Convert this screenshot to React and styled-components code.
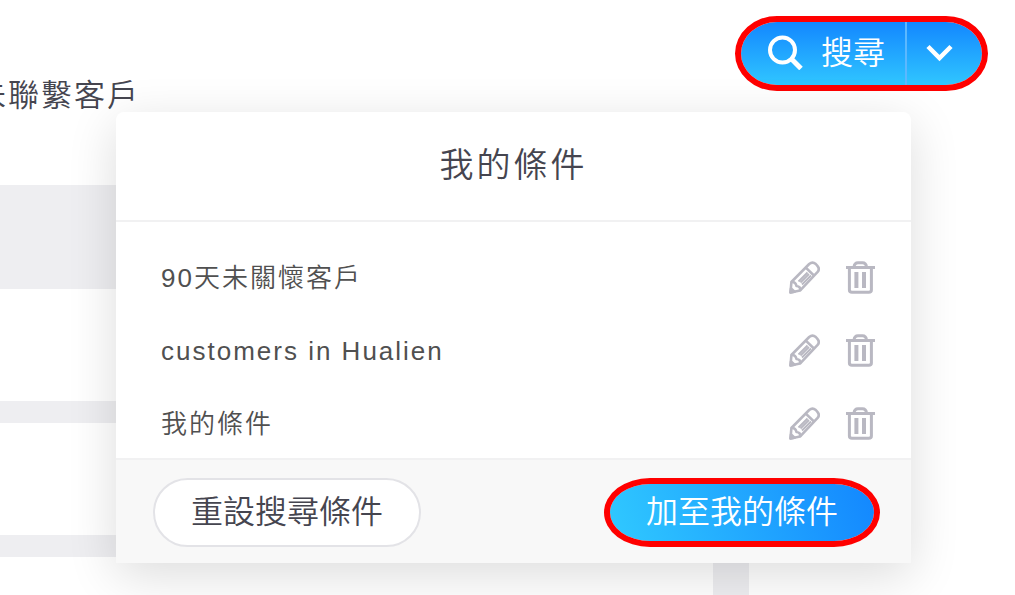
import React from 'react'
import styled, { createGlobalStyle } from 'styled-components'

const GlobalStyle = createGlobalStyle`
* {
  box-sizing: border-box;
}
body {
  margin: 0;
  background: #fff;
  color: #45454f;
  font-family: "Liberation Sans", "Noto Sans CJK TC", sans-serif;
  font-weight: 350;
}
button {
  font-family: inherit;
  font-weight: inherit;
  cursor: pointer;
}
svg {
  display: block;
}
`

const Page = styled.div`
  position: relative;
  display: flex;
  flex-direction: column;
  min-height: 100vh;
  overflow: hidden;
`

const Header = styled.header`
  display: flex;
  justify-content: space-between;
  align-items: flex-start;
  padding: 16px 27px 69px 0;
`

const FilterName = styled.div`
  display: flex;
  justify-content: flex-end;
  width: 140px;
  margin-top: 60px;
  font-size: 31px;
  line-height: 40px;
  letter-spacing: 2px;
  white-space: nowrap;
`

const SearchGroup = styled.div`
  display: flex;
  height: 75px;
  border: 6px solid #f00;
  border-radius: 42px / 50%;
  background: linear-gradient(180deg, #1387ff, #30c6ff) padding-box;
  overflow: hidden;
`

const SearchButton = styled.button`
  display: flex;
  align-items: center;
  gap: 18px;
  padding: 0 20px 2px 27px;
  border: 0;
  border-right: 2px solid #5cb8ff;
  background: none;
  color: #fff;
  font-size: 32px;
  line-height: 40px;
`

const ToggleButton = styled.button`
  display: flex;
  align-items: center;
  padding: 0 29px 2px 19px;
  border: 0;
  background: none;
  color: #fff;
`

const Results = styled.main`
  flex: 1;
  display: flex;
  flex-direction: column;
  gap: 22px;
  width: calc(100% - 266px);
  padding: 104px 36px 0 0;
  background: #eeeef1;
`

const ResultRow = styled.div`
  height: 112px;
  background: #fff;

  &:last-child {
    flex: 1;
    height: auto;
    min-height: 38px;
  }
`

const Menu = styled.section`
  position: absolute;
  top: 112px;
  left: 116px;
  right: 104px;
  border-radius: 8px 8px 0 0;
  background: #fff;
  box-shadow: 0 12px 50px rgba(0, 0, 0, 0.14);
`

const MenuTitle = styled.h2`
  margin: 0;
  padding: 28px 0 30px;
  border-bottom: 2px solid #f1f1f2;
  font-size: 34px;
  font-weight: inherit;
  line-height: 50px;
  letter-spacing: 3px;
  text-align: center;
`

const ConditionList = styled.ul`
  display: flex;
  flex-direction: column;
  gap: 28px;
  margin: 0;
  padding: 33px 36px 12px 45px;
  list-style: none;
`

const Condition = styled.li`
  display: flex;
  align-items: center;
  gap: 26px;
  height: 45px;
`

const ConditionName = styled.span`
  flex: 1;
  color: #505050;
  font-size: 26px;
  line-height: 40px;
  letter-spacing: 2px;
`

const IconButton = styled.button`
  padding: 0;
  border: 0;
  background: none;
  color: #b9b8c2;
`

const MenuFooter = styled.footer`
  display: flex;
  justify-content: space-between;
  padding: 18px 31px 16px 37px;
  border-top: 2px solid #f1f1f2;
  background: #f8f8f8;
`

const FooterButton = styled.button`
  height: 69px;
  padding: 0 36px 2px;
  border: ${(p) => (p.$primary ? '6px solid #f00' : '2px solid #e3e3e7')};
  border-radius: ${(p) => (p.$primary ? '46px / 50%' : '35px')};
  background: ${(p) => (p.$primary ? 'linear-gradient(70deg, #30c9ff, #1387ff) padding-box' : '#fff')};
  color: ${(p) => (p.$primary ? '#fff' : '#45454f')};
  font-size: 32px;
  line-height: 40px;
`

const conditions = ['90天未關懷客戶', 'customers in Hualien', '我的條件']

function SearchIcon() {
  return (
    <svg width="35" height="35" viewBox="0 0 35 35" fill="none" stroke="currentColor" strokeWidth="4">
      <circle cx="14.5" cy="15" r="12.5" />
      <path d="M23.5 24L33 33.5" strokeWidth="5" />
    </svg>
  )
}

function ChevronIcon() {
  return (
    <svg width="27" height="18" viewBox="0 0 27 18" fill="none" stroke="currentColor" strokeWidth="4.5">
      <path d="M2 2.5L13.5 14L25 2.5" />
    </svg>
  )
}

function PencilIcon() {
  return (
    <svg width="31" height="33" viewBox="0 0 31 33" fill="none" stroke="currentColor" strokeWidth="2.6" strokeLinejoin="round">
      <path d="M1.5 31.5L2.4 21L20.2 3Q23.5 .2 26.8 3L28.4 4.8Q31.2 8 28.4 11.2L11 29.6Z" />
      <path d="M2.4 21Q6.500 20.500 7.500 25Q12 25.500 11 29.600" />
      <path d="M16.800 6.600L25.200 14.800" />
      <path d="M9.500 20.500L18.500 11.500M13 23.500L22 14.500M11.500 21.500L20 13" strokeWidth="1.8" />
      <path d="M1.500 31.500L2 27.500L5.500 30.800Z" fill="currentColor" />
    </svg>
  )
}

function TrashIcon() {
  return (
    <svg width="29" height="33" viewBox="0 0 29 33" fill="none" stroke="currentColor" strokeWidth="3">
      <path d="M0 6.5H29" />
      <path d="M8 6Q8.500 1.800 12 1.800H16.500Q20 1.800 20.500 6" />
      <path d="M3.400 6.500V29Q3.400 31.300 6 31.300H22.800Q25.400 31.300 25.400 29V6.500" />
      <path d="M10.400 11V27M18 11V27" strokeWidth="4" />
    </svg>
  )
}

function ConditionRow({ name }) {
  return (
    <Condition>
      <ConditionName>{name}</ConditionName>
      <IconButton type="button" aria-label="編輯">
        <PencilIcon />
      </IconButton>
      <IconButton type="button" aria-label="刪除">
        <TrashIcon />
      </IconButton>
    </Condition>
  )
}

function App() {
  return (
    <Page>
      <GlobalStyle />
      <Header>
        <FilterName>未聯繫客戶</FilterName>
        <SearchGroup>
          <SearchButton type="button">
            <SearchIcon />
            搜尋
          </SearchButton>
          <ToggleButton type="button" aria-label="我的條件">
            <ChevronIcon />
          </ToggleButton>
        </SearchGroup>
      </Header>

      <Results>
        <ResultRow />
        <ResultRow />
        <ResultRow />
      </Results>

      <Menu>
        <MenuTitle>我的條件</MenuTitle>
        <ConditionList>
          {conditions.map((name) => (
            <ConditionRow key={name} name={name} />
          ))}
        </ConditionList>
        <MenuFooter>
          <FooterButton type="button">重設搜尋條件</FooterButton>
          <FooterButton type="button" $primary>
            加至我的條件
          </FooterButton>
        </MenuFooter>
      </Menu>
    </Page>
  )
}

export default App
